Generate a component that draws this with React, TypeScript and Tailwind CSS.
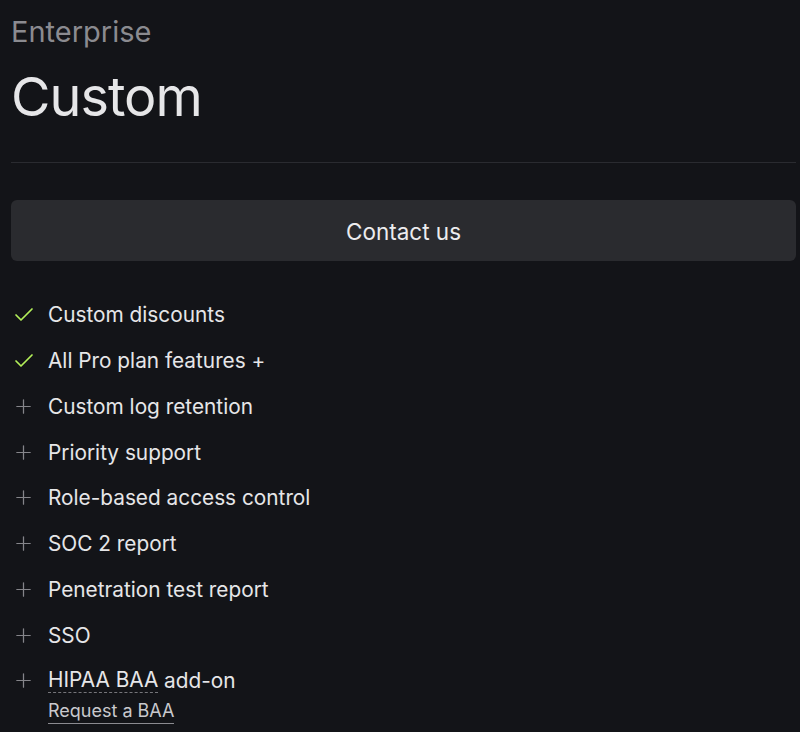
import { Check, Plus } from "lucide-react";

const features = [
    { label: "Custom discounts", included: true },
    { label: "All Pro plan features +", included: true },
    { label: "Custom log retention", included: false },
    { label: "Priority support", included: false },
    { label: "Role-based access control", included: false },
    { label: "SOC 2 report", included: false },
    { label: "Penetration test report", included: false },
    { label: "SSO", included: false },
];

export default function App() {
    return (
        <div className="min-h-[732px] w-[800px] bg-[#131418] font-['Inter',sans-serif] text-[#e6e6e8] overflow-hidden">
            <div className="pl-[11px] w-[796px]">
                <div className="pt-[14px] text-[29px] leading-[35px] text-[#8b8b90]">Enterprise</div>
                <h1 className="mt-[15px] text-[54px] leading-[66px] tracking-[-1px]">Custom</h1>

                <div className="mt-[32px] h-px bg-[#2a2b30]" />

                <button className="mt-[37px] w-full h-[61px] rounded-md bg-[#2a2b2f] pt-[2px] text-[22.5px] text-[#ececee]">
                    Contact us
                </button>

                <ul className="mt-[31px]">
                    {features.map((f) => (
                        <li key={f.label} className="flex items-center h-[45.75px] text-[20.8px]">
                            <span className="w-[37px] flex items-center">
                                {f.included ? (
                                    <Check className="ml-[1px] w-[24px] h-[24px] text-[#b3f05a]" strokeWidth={1.7} />
                                ) : (
                                    <Plus className="ml-[1px] w-[23px] h-[23px] text-[#85858a]" strokeWidth={1.3} />
                                )}
                            </span>
                            <span>{f.label}</span>
                        </li>
                    ))}

                    {/* last row has a link below */}
                    <li className="flex items-start">
                        <span className="w-[37px] h-[45.75px] flex items-center">
                            <Plus className="ml-[1px] w-[23px] h-[23px] text-[#85858a]" strokeWidth={1.3} />
                        </span>
                        <div className="flex flex-col">
                            <span className="h-[45.75px] flex items-center text-[20.8px]">
                                <span className="border-b border-dashed border-[#75757a] leading-[24px]">HIPAA BAA</span>
                                <span className="leading-[24px]">&nbsp;add-on</span>
                            </span>
                            <a className="-mt-[5px] self-start text-[18px] leading-[24px] text-[#c9c9cd] border-b border-[#8b8b90]">
                                Request a BAA
                            </a>
                        </div>
                    </li>
                </ul>
            </div>
        </div>
    );
}
